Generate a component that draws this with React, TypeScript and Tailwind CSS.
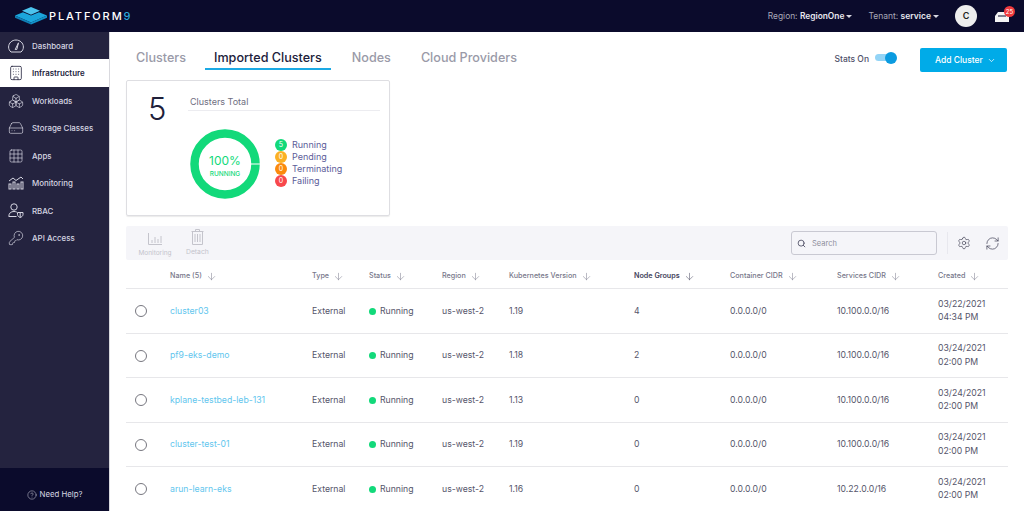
import React from "react";
import { ArrowDown, Boxes, Building, ChevronDown, CircleHelp, Grid3x3, HardDrive, KeyRound, RefreshCw, Search, Settings } from "lucide-react";

const font = { fontFamily: "Inter, 'Noto Sans', sans-serif" };

function Logo() {
  return (
    <svg width="32" height="18" viewBox="0 0 32 21" preserveAspectRatio="none" className="shrink-0">
      <polygon points="16,0 25,4.5 16,9 7,4.5" fill="#4cc4ee" />
      <polygon points="0,10 8,6 16,10 24,6 32,10 16,18" fill="#1ba6dc" />
      <polygon points="0,10 16,18 16,20.5 0,12.5" fill="#0f7fb5" />
      <polygon points="32,10 16,18 16,20.5 32,12.5" fill="#1292c9" />
    </svg>
  );
}

function GaugeIcon() {
  return (
    <svg width="16" height="14" viewBox="0 0 16 14" fill="none" stroke="#d6d6e2" strokeWidth="1">
      <path d="M3 13 H13 C14.5 11.8 15.4 10 15.4 8 C15.4 4 12 1 8 1 C4 1 0.6 4 0.6 8 C0.6 10 1.5 11.8 3 13 Z" />
      <path d="M7.2 10.5 L10.5 3.8 M8.8 10.5 L10.5 3.8 M7.2 10.5 H8.8" />
    </svg>
  );
}

function MonitoringIcon() {
  return (
    <svg width="16" height="14" viewBox="0 0 16 14" fill="none" stroke="#d6d6e2" strokeWidth="1">
      <path d="M1 5 L5 2 L8 4.5 L13 1 L15 3" />
      <rect x="1" y="8" width="2" height="5" />
      <rect x="5" y="6" width="2" height="7" />
      <rect x="9" y="8" width="2" height="5" />
      <rect x="13" y="6" width="2" height="7" />
    </svg>
  );
}

function RbacIcon() {
  return (
    <svg width="16" height="15" viewBox="0 0 16 15" fill="none" stroke="#d6d6e2" strokeWidth="1">
      <circle cx="6" cy="4" r="3.2" />
      <path d="M0.8 13.5 C0.8 10 3 8.5 6 8.5 C7 8.5 8 8.7 8.8 9.1 M0.8 13.5 H8.5" />
      <path d="M9.5 9.5 H15 V11.5 C15 13 13.5 14 12.2 14.5 C11 14 9.5 13 9.5 11.5 Z" />
      <path d="M12.2 9.5 V14.5" />
    </svg>
  );
}

const nav: { label: string; icon: React.ReactNode; active?: boolean; h: string }[] = [
  { label: "Dashboard", icon: <GaugeIcon />, h: "h-[27px]" },
  { label: "Infrastructure", icon: <Building size={16} strokeWidth={1.2} />, active: true, h: "h-[28px]" },
  { label: "Workloads", icon: <Boxes size={16} strokeWidth={1} />, h: "h-[27px]" },
  { label: "Storage Classes", icon: <HardDrive size={16} strokeWidth={1} />, h: "h-[28px]" },
  { label: "Apps", icon: <Grid3x3 size={16} strokeWidth={1} />, h: "h-[27px]" },
  { label: "Monitoring", icon: <MonitoringIcon />, h: "h-[28px]" },
  { label: "RBAC", icon: <RbacIcon />, h: "h-[27px]" },
  { label: "API Access", icon: <KeyRound size={16} strokeWidth={1} />, h: "h-[28px]" },
];

const cols = "grid grid-cols-[44px_142px_57px_73px_67px_125px_96px_107px_101px_70px] items-center";

const heads = ["Name (5)", "Type", "Status", "Region", "Kubernetes Version", "Node Groups", "Container CIDR", "Services CIDR", "Created"];

const rows = [
  ["cluster03", "1.19", "4", "10.100.0.0/16", "03/22/2021", "04:34 PM"],
  ["pf9-eks-demo", "1.18", "2", "10.100.0.0/16", "03/24/2021", "02:00 PM"],
  ["kplane-testbed-leb-131", "1.13", "0", "10.100.0.0/16", "03/24/2021", "02:00 PM"],
  ["cluster-test-01", "1.19", "0", "10.100.0.0/16", "03/24/2021", "02:00 PM"],
  ["arun-learn-eks", "1.16", "0", "10.22.0.0/16", "03/24/2021", "02:00 PM"],
];

const legend = [
  ["5", "Running", "bg-[#12d97a]"],
  ["0", "Pending", "bg-[#fbb124]"],
  ["0", "Terminating", "bg-[#fb8a0c]"],
  ["0", "Failing", "bg-[#f8484c]"],
];

export default function App() {
  return (
    <div style={font} className="flex h-[511px] w-[1024px] flex-col overflow-hidden bg-white">
      <header className="flex h-8 shrink-0 items-center bg-[#0b0b2c] text-[8.4px] text-[#a9a9b8]">
        <div className="ml-[15px]"><Logo /></div>
        <span className="ml-[2px] text-[11px] font-medium tracking-[1.9px] text-white">PLATFORM<span className="text-[#2aa9dc]">9</span></span>
        <span className="ml-auto">Region: <b className="font-semibold text-[#e8e8ef]">RegionOne</b></span>
        <span className="ml-[2px] mt-[1px] h-0 w-0 border-x-[3px] border-t-[3px] border-x-transparent border-t-[#d8d8e2]" />
        <span className="ml-[16px] text-[8.5px]">Tenant: <b className="font-semibold text-[#e8e8ef]">service</b></span>
        <span className="ml-[2px] mt-[1px] h-0 w-0 border-x-[3px] border-t-[3px] border-x-transparent border-t-[#d8d8e2]" />
        <span className="ml-[16px] flex h-[22px] w-[22px] items-center justify-center rounded-full bg-[#eeeeee] text-[9px] font-semibold text-[#222]">C</span>
        <div className="relative ml-[18px] mr-[15px] h-[12px] w-[14px]">
          <svg width="14" height="10" viewBox="0 0 14 10" className="mt-[2px]"><path d="M3 0 H11 L14 4 V10 H0 V4 Z" fill="#f4f4f4" /><path d="M3 4 H11" stroke="#0b0b2c" /></svg>
          <span className="absolute -right-[6px] -top-[4px] flex h-[11px] w-[11px] items-center justify-center rounded-full bg-[#f0393c] text-[6px] text-white">25</span>
        </div>
      </header>

      <div className="flex min-h-0 flex-1">
        <aside className="flex w-[110px] shrink-0 flex-col border-r border-[#d9d9de] bg-[#24233f]">
          <nav className="flex-1">
            {nav.map((n) => (
              <div
                key={n.label}
                className={`flex items-center ${n.h} ${n.active ? "bg-white text-[#20203a]" : "text-[#d6d6e2]"}`}
              >
                <span className="flex w-[32px] shrink-0 justify-center">{n.icon}</span>
                <span className={`pt-[2px] text-[7.9px] ${n.active ? "font-semibold" : "font-medium"}`}>{n.label}</span>
              </div>
            ))}
          </nav>
          <div className="flex h-[43px] items-center justify-center gap-[3px] bg-[#0b0b2c] pt-[10px] text-[7.8px] text-[#d6d6e2]">
            <CircleHelp size={10} strokeWidth={1.2} />
            <span>Need Help?</span>
          </div>
        </aside>

        <main className="min-w-0 flex-1 pl-[16px] pr-[16px]">
          <div className="flex h-[48px] items-start">
            <nav className="ml-[1px] mt-[17px] flex text-[12.6px] leading-[18px] font-medium text-[#9a9aa8]">
              <span className="px-[9px]">Clusters</span>
              <span className="ml-[10px] h-[21px] border-b-2 border-[#1ba9e4] px-[9px] text-[#20203a]">Imported Clusters</span>
              <span className="ml-[12px] px-[9px]">Nodes</span>
              <span className="ml-[12px] px-[9px]">Cloud Providers</span>
            </nav>
            <span className="ml-auto mt-[21px] text-[8.5px] font-medium text-[#50506a]">Stats On</span>
            <div className="relative ml-[6px] mt-[22px] h-[7px] w-[19px] rounded-full bg-[#93d4f6]">
              <span className="absolute -right-[3px] -top-[2.5px] h-[12px] w-[12px] rounded-full bg-[#0b9be0]" />
            </div>
            <button className="ml-[26px] mr-px mt-[16px] flex h-[24px] w-[87px] items-center rounded-[2px] bg-[#00abe8] pl-[15px] text-[8.5px] font-medium text-white">
              Add Cluster <ChevronDown size={9} className="ml-[4px]" />
            </button>
          </div>

          <section className="flex h-[136px] w-[264px] rounded-[2px] border-[1.5px] border-[#dedee2] shadow-[0_1px_1px_rgba(0,0,0,0.08)]">
            <div className="w-[59px] shrink-0 pl-[21px] pt-[8px] text-[31px] leading-[40px] font-light text-[#20203a]">5</div>
            <div className="w-[194px] shrink-0 pl-[2px]">
              <div className="mt-[14px] h-[16px] border-b border-[#ececf0] pl-[2px] text-[9px] text-[#6e6e80]">Clusters Total</div>
              <div className="mt-[18px] flex items-start">
                <div className="relative ml-[2px] h-[70px] w-[70px] shrink-0">
                  <svg width="70" height="70" viewBox="0 0 70 70">
                    <circle cx="35" cy="35" r="30.5" fill="none" stroke="#12d97a" strokeWidth="8.5" />
                    <rect x="60" y="34.5" width="10" height="1" fill="#fff" />
                  </svg>
                  <div className="absolute inset-0 flex flex-col items-center justify-center pt-[3px] text-[#12d97a]">
                    <span className="text-[12px] leading-[15px]">100%</span>
                    <span className="mt-[2px] text-[6.5px] leading-[8px] font-medium">RUNNING</span>
                  </div>
                </div>
                <ul className="ml-[15px] mt-[10px]">
                  {legend.map(([v, l, c]) => (
                    <li key={l} className="flex h-[12px] items-center">
                      <span className={`flex h-3 w-3 items-center justify-center rounded-full text-[7px] text-white ${c}`}>{v}</span>
                      <span className="ml-[5px] text-[9px] text-[#5b5c99]">{l}</span>
                    </li>
                  ))}
                </ul>
              </div>
            </div>
          </section>

          <div className="mt-[10px] flex h-[34px] items-center rounded-[2px] bg-[#f5f5f9]">
            <div className="ml-[12px] flex w-[34px] flex-col items-center pt-[5px] text-[6.5px] text-[#c4c4cc]">
              <svg width="16" height="13" viewBox="0 0 16 13" fill="none" stroke="#c4c4cc" strokeWidth="1"><path d="M1.5 0 V11.5 H15" /><path d="M5 10 V7 M8 10 V4 M11 10 V6 M14 10 V3" /></svg>
              <span className="mt-[3px]">Monitoring</span>
            </div>
            <div className="ml-[14px] flex flex-col items-center pt-[1px] text-[6.8px] text-[#c4c4cc]">
              <svg width="13" height="16" viewBox="0 0 13 16" fill="none" stroke="#c4c4cc" strokeWidth="1"><path d="M0.5 2.5 H12.5 M4.5 2.5 V0.5 H8.5 V2.5" /><path d="M1.5 2.5 V15.5 H11.5 V2.5" /><path d="M4 5 V13 M6.5 5 V13 M9 5 V13" /></svg>
              <span className="mt-[2px]">Detach</span>
            </div>
            <div className="ml-auto flex h-[24px] w-[146px] items-center rounded-[3px] border border-[#c9c9d2] pl-[5px] text-[7.5px] text-[#8e8e9c]">
              <Search size={9} strokeWidth={2.4} className="text-[#55556a]" />
              <span className="ml-[6px] pt-[1px]">Search</span>
            </div>
            <div className="ml-[10px] h-[22px] w-px bg-[#e8e8ee]" />
            <Settings size={14} strokeWidth={1.1} className="ml-[9px] mr-px text-[#3b3b50]" />
            <RefreshCw size={15} strokeWidth={1.1} className="ml-[13px] mr-[8px] text-[#3b3b50]" />
          </div>

          <div className={`${cols} h-[29px] border-b border-[#e7e7ea] pt-[4px] text-[7.2px] font-medium text-[#77778a]`}>
            <span />
            {heads.map((h) => (
              <span key={h} className={`flex items-center gap-[4px] ${h === "Node Groups" ? "font-semibold text-[#44445c]" : ""}`}>
                {h}
                <ArrowDown size={11} strokeWidth={1.1} />
              </span>
            ))}
          </div>

          {rows.map((r) => (
            <div key={r[0]} className={`${cols} h-[44.5px] border-b border-[#e7e7ea] pt-[1px] text-[8.7px] text-[#55556a]`}>
              <span className="ml-[9px] h-[12px] w-[12px] rounded-full border-[1.5px] border-[#77777f]" />
              <span className="text-[#62c6ee]">{r[0]}</span>
              <span>External</span>
              <span className="flex items-center gap-[4px]">
                <span className="h-[7px] w-[7px] rounded-full bg-[#12d97a]" />
                Running
              </span>
              <span>us-west-2</span>
              <span>{r[1]}</span>
              <span>{r[2]}</span>
              <span>0.0.0.0/0</span>
              <span>{r[3]}</span>
              <span className="leading-[13.5px]">{r[4]}<br />{r[5]}</span>
            </div>
          ))}
        </main>
      </div>
    </div>
  );
}
